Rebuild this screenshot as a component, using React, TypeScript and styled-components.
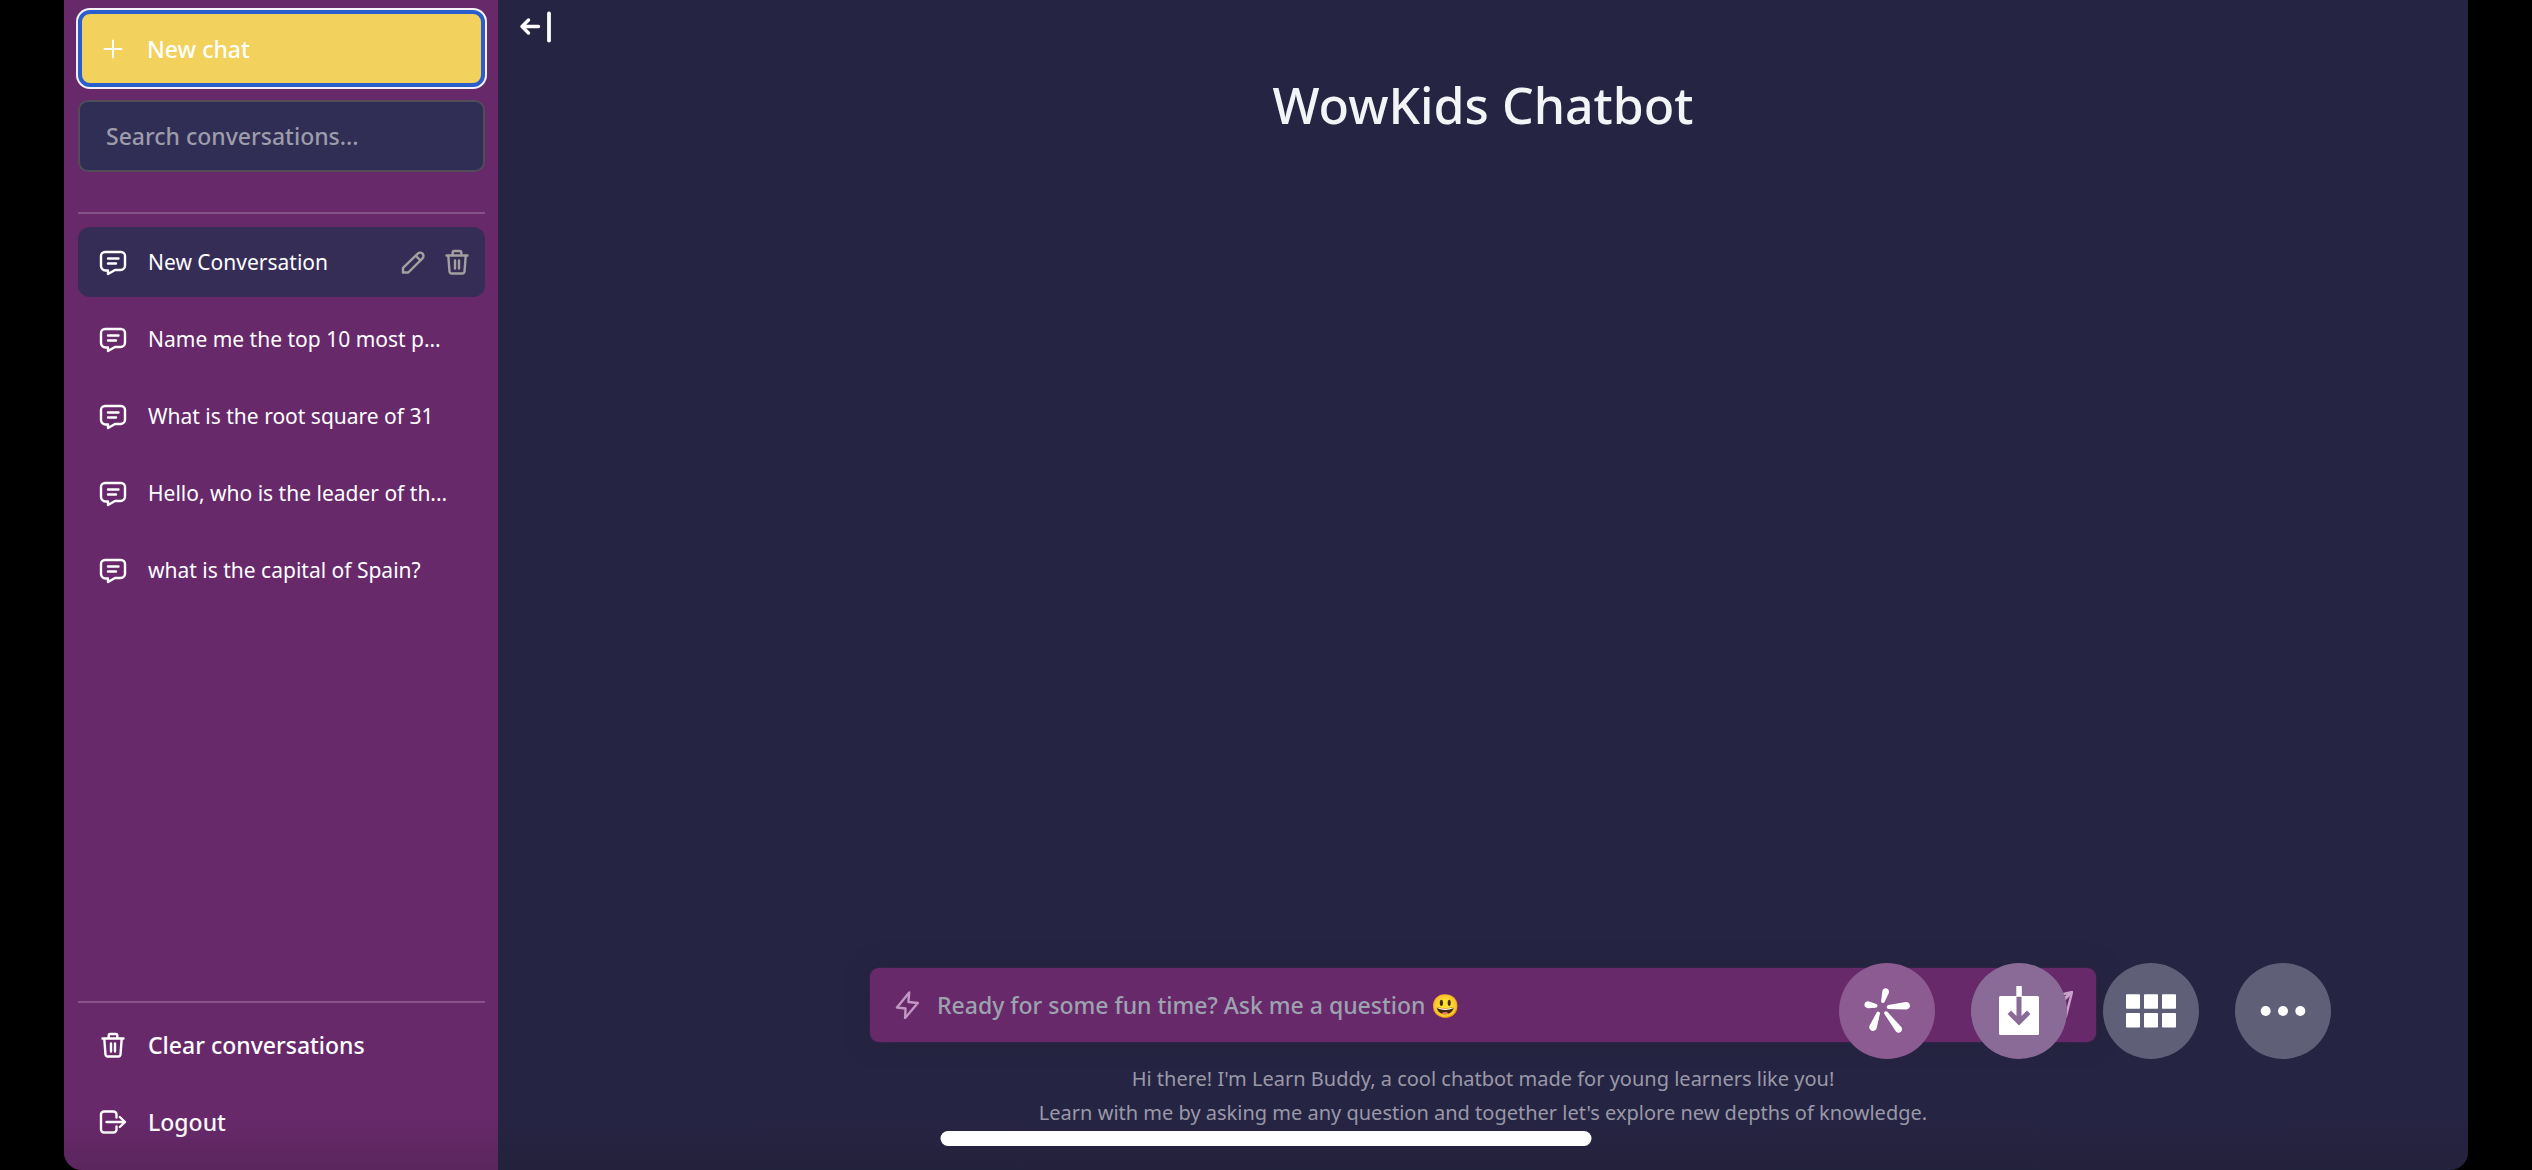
import React from "react";
import styled, { createGlobalStyle, css } from "styled-components";

const color = {
  purple: "#68296b",
  night: "#262443",
  field: "#302e55",
  active: "#362d57",
  yellow: "#f2d15c",
  ring: "#2a5ecb",
  muted: "#9a99a8",
  line: "rgba(255, 255, 255, 0.2)",
};

const GlobalStyle = createGlobalStyle`
  *, *::before, *::after { box-sizing: border-box; }
  body {
    margin: 0;
    background: #000;
    color: #fff;
    font-family: "Noto Sans", "Open Sans", sans-serif;
  }
  button, input { font: inherit; color: inherit; }
  svg { display: block; flex: none; }
`;

const Screen = styled.div`
  position: relative;
  min-height: 100vh;
  padding: 0 64px;
  display: flex;
  background: #000;
`;

const Shell = styled.div`
  position: relative;
  flex: 1;
  display: flex;
  background: ${color.night};
  border-radius: 0 0 18px 18px;
  overflow: hidden;

  &::after {
    content: "";
    position: absolute;
    inset: auto 0 0 0;
    height: 56px;
    background: linear-gradient(to top, rgba(20, 20, 20, 0.16), rgba(20, 20, 20, 0));
    pointer-events: none;
  }
`;

const Sidebar = styled.aside`
  flex: 0 0 434px;
  display: flex;
  flex-direction: column;
  padding: 10px 13px 13px 14px;
  background: ${color.purple};
`;

const NewChatButton = styled.button`
  display: flex;
  align-items: center;
  gap: 20px;
  height: 77px;
  padding: 0 17px;
  border: 4px solid ${color.ring};
  border-radius: 12px;
  background: ${color.yellow};
  box-shadow: 0 0 0 2px #f4f2f8;
  font-size: 23px;
  font-weight: 500;
  cursor: pointer;
`;

const SearchInput = styled.input`
  height: 72px;
  margin-top: 13px;
  padding: 0 26px;
  border: 2px solid #504c58;
  border-radius: 10px;
  background: ${color.field};
  font-size: 23px;
  font-weight: 500;
  outline: none;

  &::placeholder {
    color: #9c9cab;
    opacity: 1;
  }
`;

const Divider = styled.hr<{ $top?: number; $bottom: number }>`
  width: 100%;
  height: 2px;
  margin: ${(p) => p.$top ?? 0}px 0 ${(p) => p.$bottom}px;
  border: 0;
  background: ${color.line};
`;

const List = styled.ul`
  display: flex;
  flex-direction: column;
  gap: 7px;
  margin: 0;
  padding: 0;
  list-style: none;
`;

const Conversations = styled.nav`
  flex: 1;
`;

const Row = styled.li<{ $active?: boolean }>`
  display: flex;
  align-items: center;
  gap: 16px;
  height: 70px;
  padding: 0 14px 0 21px;
  border-radius: 12px;
  background: ${(p) => (p.$active ? color.active : "transparent")};
`;

const bare = css`
  padding: 0;
  border: 0;
  background: none;
  cursor: pointer;
`;

const RowButton = styled.button<{ $large?: boolean }>`
  ${bare}
  flex: 1;
  display: flex;
  align-items: center;
  gap: 21px;
  font-size: ${(p) => (p.$large ? 23 : 21)}px;
  font-weight: ${(p) => (p.$large ? 500 : 400)};
  text-align: left;
  white-space: nowrap;
`;

const IconButton = styled.button<{ $tone?: string }>`
  ${bare}
  color: ${(p) => p.$tone ?? "#fff"};
`;

const Main = styled.main`
  position: relative;
  flex: 1;
  display: flex;
  flex-direction: column;
  align-items: center;
  padding: 11px 21px 40px;
`;

const TopBar = styled.header`
  align-self: stretch;
  display: flex;
`;

const Title = styled.h1`
  flex: 1;
  margin: 30px 0 0;
  font-size: 50px;
  font-weight: 500;
  line-height: 64px;
  color: #f3f4f6;
`;

const Composer = styled.form`
  display: flex;
  align-items: center;
  gap: 16px;
  width: 100%;
  max-width: 1226px;
  height: 74px;
  padding: 0 23px;
  border-radius: 9px;
  background: ${color.purple};
  box-shadow: 0 0 2px #5a285f, 0 0 22px rgba(32, 36, 50, 0.5);
  color: #c096c2;
`;

const PromptInput = styled.input`
  flex: 1;
  min-width: 0;
  height: 100%;
  padding: 0;
  border: 0;
  background: none;
  outline: none;
  font-size: 23px;
  font-weight: 500;

  &::placeholder {
    color: #9ca3af;
    opacity: 1;
  }
`;

const Notes = styled.div`
  margin-top: 20px;
  text-align: center;
  font-size: 20px;
  line-height: 34px;
  color: ${color.muted};

  p { margin: 0; }
`;

const FloatingTools = styled.div`
  position: absolute;
  right: 137px;
  bottom: 111px;
  display: flex;
  gap: 36px;
`;

const ToolButton = styled.button<{ $tint: string }>`
  ${bare}
  width: 96px;
  height: 96px;
  border-radius: 50%;
  background: ${(p) => p.$tint};
`;

const HomeIndicator = styled.div`
  position: absolute;
  left: 50%;
  bottom: 24px;
  width: 651px;
  height: 15px;
  border-radius: 8px;
  background: #fff;
  transform: translateX(-50%);
`;

type IconProps = { children: React.ReactNode; width?: number };

const LineIcon = ({ children, width = 2.4 }: IconProps) => (
  <svg
    width="28"
    height="28"
    viewBox="0 0 28 28"
    fill="none"
    stroke="currentColor"
    strokeWidth={width}
    strokeLinecap="round"
    strokeLinejoin="round"
    aria-hidden="true"
  >
    {children}
  </svg>
);

const PlusIcon = () => (
  <LineIcon width={1.9}>
    <path d="M14 5.500v17M5.500 14h17" />
  </LineIcon>
);

const ChatIcon = () => (
  <LineIcon>
    <path d="M6 4h16a4 4 0 0 1 4 4v9.500a4.500 4.500 0 0 1-4.500 4.500H16l-7 4v-3.500H6.500a4.500 4.500 0 0 1-4.500-4.500V8a4 4 0 0 1 4-4z" />
    <path d="M9 10.500h10.500M9 15.500h8" />
  </LineIcon>
);

const PencilIcon = () => (
  <LineIcon>
    <path d="M18.800 5.600a3.300 3.300 0 0 1 4.700 4.700L9.300 24.500H4v-4.700z" />
    <path d="M17 8l4.400 4.400" />
  </LineIcon>
);

const TrashIcon = () => (
  <LineIcon>
    <path d="M3.500 7.500h21M9.700 7V4.500a1.500 1.500 0 0 1 1.500-1.500h5.600a1.500 1.500 0 0 1 1.500 1.500V7" />
    <path d="M5.300 8l1.200 15.500a2.200 2.200 0 0 0 2.200 2h10.600a2.200 2.200 0 0 0 2.200-2L22.700 8" />
    <path d="M12 12.500v8M16 12.500v8" />
  </LineIcon>
);

const LogoutIcon = () => (
  <LineIcon>
    <path d="M17.500 9.500V6.500a3 3 0 0 0-3-3H5a3 3 0 0 0-3 3v15a3 3 0 0 0 3 3h9.500a3 3 0 0 0 3-3v-3" />
    <path d="M7.500 14H26M20.800 9l5.200 5-5.200 5" />
  </LineIcon>
);

const BoltIcon = () => (
  <LineIcon>
    <path d="M16.200 1.500L4 16.500l8.500 1-.4 9.500L24.800 12l-9.400-1z" />
  </LineIcon>
);

const SendIcon = () => (
  <LineIcon>
    <path d="M27 1L2 7l8 8zM27 1L21 25l-8-10z" />
    <path d="M27 1L13 15" />
  </LineIcon>
);

const CollapseIcon = () => (
  <svg width="32" height="32" viewBox="0 0 32 32" fill="none" stroke="currentColor" strokeWidth="3.400" strokeLinecap="round" strokeLinejoin="round" aria-hidden="true">
    <path d="M19.500 15.500H3M9.500 9L3 15.500l6.500 6.500" />
    <path d="M30 2.500v27" strokeWidth="3.800" />
  </svg>
);

/* Teardrop between two circles: a wide outer end and a narrow inner end. */
const petal = (x1: number, y1: number, r1: number, x2: number, y2: number, r2: number) => {
  const a = Math.atan2(y2 - y1, x2 - x1);
  const b = Math.acos((r1 - r2) / Math.hypot(x2 - x1, y2 - y1));
  const at = (x: number, y: number, r: number, t: number) =>
    `${(x + r * Math.cos(t)).toFixed(2)} ${(y + r * Math.sin(t)).toFixed(2)}`;
  return (
    `M${at(x1, y1, r1, a + b)}A${r1} ${r1} 0 1 1 ${at(x1, y1, r1, a - b)}` +
    `L${at(x2, y2, r2, a - b)}A${r2} ${r2} 0 0 1 ${at(x2, y2, r2, a + b)}Z`
  );
};

const PETALS = [
  petal(46.7, 28.7, 3.4, 43.9, 38.2, 1.8),
  petal(67.3, 42.7, 3.7, 49.7, 44, 2),
  petal(59.5, 66.2, 3.5, 47, 50, 1.8),
  petal(34, 64.2, 3.8, 39.2, 50.4, 1.8),
  petal(28.9, 41.7, 3.5, 36.5, 42.8, 2),
];

const ToolIcon = ({ children }: { children: React.ReactNode }) => (
  <svg width="96" height="96" viewBox="0 0 96 96" fill="#fff" aria-hidden="true">
    {children}
  </svg>
);

const PetalsIcon = () => (
  <ToolIcon>
    {PETALS.map((d) => (
      <path key={d} d={d} />
    ))}
  </ToolIcon>
);

const DownloadIcon = () => (
  <ToolIcon>
    <rect x="28" y="33" width="40" height="39" rx="1.500" />
    <rect x="45.300" y="23" width="5.500" height="10.500" />
    <path d="M48 33.800V59M38.300 49.300L48 59l9.700-9.700" fill="none" stroke="#8a6b97" strokeWidth="5" />
  </ToolIcon>
);

const GridIcon = () => (
  <ToolIcon>
    {[31.3, 50].flatMap((y) =>
      [23, 41, 59].map((x) => <rect key={`${x}-${y}`} x={x} y={y} width="14" height="14.500" rx="0.800" />)
    )}
  </ToolIcon>
);

const DotsIcon = () => (
  <ToolIcon>
    {[30.7, 48, 65.3].map((x) => (
      <circle key={x} cx={x} cy="48" r="5" />
    ))}
  </ToolIcon>
);

const CONVERSATIONS = [
  "New Conversation",
  "Name me the top 10 most p…",
  "What is the root square of 31",
  "Hello, who is the leader of th...",
  "what is the capital of Spain?",
];

export default function App() {
  return (
    <>
      <GlobalStyle />
      <Screen>
        <Shell>
          <Sidebar>
            <NewChatButton type="button">
              <PlusIcon />
              New chat
            </NewChatButton>
            <SearchInput type="search" aria-label="Search conversations" placeholder="Search conversations..." />
            <Divider $top={40} $bottom={13} />
            <Conversations aria-label="Conversations">
              <List>
                {CONVERSATIONS.map((name, i) => (
                  <Row key={name} $active={i === 0}>
                    <RowButton type="button">
                      <ChatIcon />
                      {name}
                    </RowButton>
                    {i === 0 && (
                      <>
                        <IconButton type="button" aria-label="Rename" $tone="#a3a09f">
                          <PencilIcon />
                        </IconButton>
                        <IconButton type="button" aria-label="Delete" $tone="#a3a09f">
                          <TrashIcon />
                        </IconButton>
                      </>
                    )}
                  </Row>
                ))}
              </List>
            </Conversations>
            <Divider $bottom={7} />
            <List>
              <Row>
                <RowButton type="button" $large>
                  <TrashIcon />
                  Clear conversations
                </RowButton>
              </Row>
              <Row>
                <RowButton type="button" $large>
                  <LogoutIcon />
                  Logout
                </RowButton>
              </Row>
            </List>
          </Sidebar>
          <Main>
            <TopBar>
              <IconButton type="button" aria-label="Collapse sidebar">
                <CollapseIcon />
              </IconButton>
            </TopBar>
            <Title>WowKids Chatbot</Title>
            <Composer>
              <BoltIcon />
              <PromptInput
                type="text"
                aria-label="Message"
                placeholder="Ready for some fun time? Ask me a question 😃"
              />
              <IconButton type="submit" aria-label="Send" $tone="#c9a3c9">
                <SendIcon />
              </IconButton>
            </Composer>
            <Notes>
              <p>Hi there! I'm Learn Buddy, a cool chatbot made for young learners like you!</p>
              <p>Learn with me by asking me any question and together let's explore new depths of knowledge.</p>
            </Notes>
            <FloatingTools>
              <ToolButton type="button" aria-label="Assistant" $tint="#8b5b91">
                <PetalsIcon />
              </ToolButton>
              <ToolButton type="button" aria-label="Download" $tint="#8a6b97">
                <DownloadIcon />
              </ToolButton>
              <ToolButton type="button" aria-label="Apps" $tint="#5f5f78">
                <GridIcon />
              </ToolButton>
              <ToolButton type="button" aria-label="More" $tint="#5f5f78">
                <DotsIcon />
              </ToolButton>
            </FloatingTools>
          </Main>
        </Shell>
        <HomeIndicator />
      </Screen>
    </>
  );
}
